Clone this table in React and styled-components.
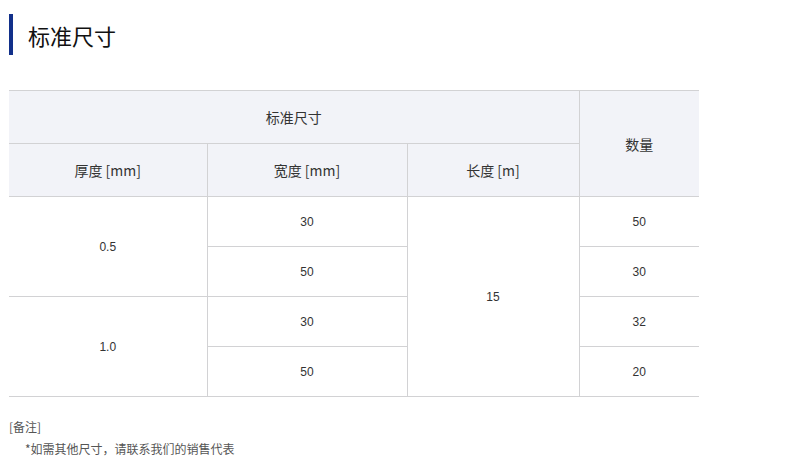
import React from "react";
import styled, { createGlobalStyle } from "styled-components";

const Global = createGlobalStyle`
  html, body { margin: 0; padding: 0; background: #fff; }
  body { font-family: "Noto Sans CJK SC", "Noto Sans", sans-serif; color: #333; }
`;

const Page = styled.div`
  padding: 14px 9px 0 9px;
  width: 690px;
`;

const Title = styled.h2`
  margin: 0;
  height: 41px;
  display: flex;
  align-items: center;
  border-left: 4px solid #12308a;
  padding-left: 15px;
  font-size: 22px;
  font-weight: 400;
  color: #111;
  line-height: 1;
`;

const Table = styled.table`
  margin-top: 35px;
  width: 690px;
  border-collapse: collapse;
  table-layout: fixed;
  font-size: 12px;
`;

const HeadRow = styled.tr`
  height: 53px;
`;

const Row = styled.tr`
  height: 50px;
`;

const Th = styled.th`
  background: #f2f3f8;
  font-weight: 400;
  font-size: 14px;
  color: #333;
  border-top: 1px solid #d2d2d4;
  border-bottom: 1px solid #d2d2d4;
  border-left: ${(p) => (p.$first ? "none" : "1px solid #d2d2d4")};
  padding: 0;
  text-align: center;
  vertical-align: middle;
`;

const Td = styled.td`
  border-top: 1px solid #d2d2d4;
  border-bottom: 1px solid #d2d2d4;
  border-left: ${(p) => (p.$first ? "none" : "1px solid #d2d2d4")};
  padding: 0;
  text-align: center;
  vertical-align: middle;
  color: #333;
  font-family: "Liberation Sans", "Noto Sans CJK SC", sans-serif;
`;

const Notes = styled.div`
  margin-top: 19px;
  font-size: 12px;
  line-height: 22px;
  color: #555;
`;

const NoteLine = styled.div`
  padding-left: ${(p) => (p.$indent ? "16px" : "0")};
`;

export default function App() {
  return (
    <>
      <Global />
      <Page>
        <Title>标准尺寸</Title>
        <Table>
          <colgroup>
            <col style={{ width: 198 }} />
            <col style={{ width: 200 }} />
            <col style={{ width: 172 }} />
            <col style={{ width: 120 }} />
          </colgroup>
          <thead>
            <HeadRow>
              <Th $first colSpan={3}>标准尺寸</Th>
              <Th rowSpan={2}>数量</Th>
            </HeadRow>
            <HeadRow>
              <Th $first>厚度 [mm]</Th>
              <Th>宽度 [mm]</Th>
              <Th>长度 [m]</Th>
            </HeadRow>
          </thead>
          <tbody>
            <Row>
              <Td $first rowSpan={2}>0.5</Td>
              <Td>30</Td>
              <Td rowSpan={4}>15</Td>
              <Td>50</Td>
            </Row>
            <Row>
              <Td>50</Td>
              <Td>30</Td>
            </Row>
            <Row>
              <Td $first rowSpan={2}>1.0</Td>
              <Td>30</Td>
              <Td>32</Td>
            </Row>
            <Row>
              <Td>50</Td>
              <Td>20</Td>
            </Row>
          </tbody>
        </Table>
        <Notes>
          <NoteLine>[备注]</NoteLine>
          <NoteLine $indent>*如需其他尺寸，请联系我们的销售代表</NoteLine>
        </Notes>
      </Page>
    </>
  );
}
